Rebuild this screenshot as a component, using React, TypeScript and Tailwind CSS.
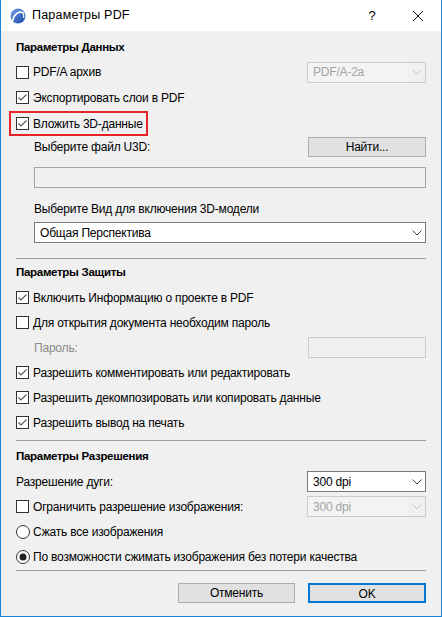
import React from "react";

const font = "font-['Liberation_Sans',Arial,sans-serif]";

function Box({ checked }: { checked?: boolean }) {
  return (
    <svg width="13" height="13" viewBox="0 0 13 13" className="shrink-0">
      <rect x="0.5" y="0.5" width="12" height="12" fill="#fff" stroke="#333" />
      {checked && (
        <path d="M2.5 6.5 L5 9 L10.5 3.5" fill="none" stroke="#555" strokeWidth="1.1" />
      )}
    </svg>
  );
}

function Radio({ checked }: { checked?: boolean }) {
  return (
    <svg width="14" height="14" viewBox="0 0 14 14" className="shrink-0">
      <circle cx="7" cy="7" r="6.5" fill="#fff" stroke="#333" />
      {checked && <circle cx="7" cy="7" r="3.5" fill="#222" />}
    </svg>
  );
}

function Chevron({ color }: { color: string }) {
  return (
    <svg width="10" height="6" viewBox="0 0 10 6">
      <path d="M0.5 0.5 L5 5 L9.5 0.5" fill="none" stroke={color} strokeWidth="1" />
    </svg>
  );
}

function Select({ value, disabled }: { value: string; disabled?: boolean }) {
  return (
    <div
      className={`flex h-[21px] items-center border ${
        disabled ? "border-[#cccccc] bg-[#f0f0f0] text-[#a3a3a3]" : "border-[#7a7a7a] bg-white text-black"
      }`}
    >
      <span className={`flex h-full flex-1 items-center pl-[5px] ${disabled ? "bg-[#f3f3f3]" : ""}`}>{value}</span>
      <span className="flex w-[17px] justify-center">
        <Chevron color={disabled ? "#c4c4c4" : "#444"} />
      </span>
    </div>
  );
}

function CheckRow({ label, checked }: { label: string; checked?: boolean }) {
  return (
    <div className="flex h-[25px] items-center gap-[4px] whitespace-nowrap">
      <Box checked={checked} />
      <span>{label}</span>
    </div>
  );
}

function Header({ children }: { children: React.ReactNode }) {
  return (
    <div className="flex h-[24px] items-center text-[11.5px] font-bold tracking-[-0.3px]">{children}</div>
  );
}

function Logo() {
  return (
    <svg width="16" height="16" viewBox="0 0 16 16">
      <defs>
        <linearGradient id="lg" x1="0" y1="0" x2="1" y2="1">
          <stop offset="0" stopColor="#6f9ce8" />
          <stop offset="1" stopColor="#1d4aa8" />
        </linearGradient>
      </defs>
      <circle cx="8" cy="8" r="7.5" fill="url(#lg)" />
      <path d="M2.5 13 C4 6 9 2.5 13.5 5" fill="none" stroke="#fff" strokeWidth="1.6" />
      <path d="M13.5 5 L13.8 10" fill="none" stroke="#fff" strokeWidth="1.2" />
    </svg>
  );
}

export default function App() {
  return (
    <div
      className={`${font} flex h-[617px] w-[442px] flex-col border-x border-b border-[#1883d7] bg-[#f0f0f0] text-[12px] tracking-[-0.2px] text-black`}
    >
      {/* Title bar */}
      <div className="flex h-[31px] items-center bg-white pl-[9px]">
        <Logo />
        <span className="ml-[6px] flex-1 text-[12.5px] tracking-[0.2px]">Параметры PDF</span>
        <span className="w-[46px] text-center text-[13px]">?</span>
        <span className="flex w-[46px] justify-center">
          <svg width="10" height="10" viewBox="0 0 10 10">
            <path d="M0 0 L10 10 M10 0 L0 10" stroke="#111" strokeWidth="1" />
          </svg>
        </span>
      </div>

      <div className="flex flex-col px-[15px] pt-[5px]">
        <Header>Параметры Данных</Header>
        <div className="flex h-[24px] items-center justify-between">
          <div className="flex items-center gap-[4px]">
            <Box />
            <span>PDF/A архив</span>
          </div>
          <div className="w-[119px]">
            <Select value="PDF/A-2a" disabled />
          </div>
        </div>
        <div className="flex h-[27px] items-center gap-[4px]">
          <Box checked />
          <span>Экспортировать слои в PDF</span>
        </div>
        <div className="-ml-[7px] flex h-[25px] w-[139px] items-center gap-[4px] whitespace-nowrap border-2 border-[#e8242b] pl-[5px]">
          <Box checked />
          <span>Вложить 3D-данные</span>
        </div>

        <div className="flex flex-col pl-[18px]">
          <div className="flex h-[22px] items-center justify-between">
            <span>Выберите файл U3D:</span>
            <button className="h-[20px] w-[118px] border border-[#adadad] bg-[#e1e1e1]">Найти...</button>
          </div>
          <div className="mt-[9px] h-[21px] border border-[#a5a5a5] bg-[#f0f0f0]" />
          <div className="mt-[10px] flex h-[22px] items-center">Выберите Вид для включения 3D-модели</div>
          <div className="mt-[2px]">
            <Select value="Общая Перспектива" />
          </div>
        </div>

        <div className="mt-[15px] h-px bg-[#a0a0a0]" />

        <div className="mt-[2px]">
          <Header>Параметры Защиты</Header>
        </div>
        <CheckRow label="Включить Информацию о проекте в PDF" checked />
        <CheckRow label="Для открытия документа необходим пароль" />
        <div className="flex h-[25px] items-center justify-between pl-[18px]">
          <span className="text-[#8a8a8a]">Пароль:</span>
          <div className="h-[21px] w-[118px] border border-[#cccccc] bg-[#f0f0f0]" />
        </div>
        <CheckRow label="Разрешить комментировать или редактировать" checked />
        <CheckRow label="Разрешить декомпозировать или копировать данные" checked />
        <CheckRow label="Разрешить вывод на печать" checked />

        <div className="mt-[5px] h-px bg-[#a0a0a0]" />

        <div className="mt-[4px]">
          <Header>Параметры Разрешения</Header>
        </div>
        <div className="flex h-[25px] items-center justify-between">
          <span>Разрешение дуги:</span>
          <div className="w-[119px]">
            <Select value="300 dpi" />
          </div>
        </div>
        <div className="flex h-[25px] items-center justify-between">
          <div className="flex items-center gap-[4px]">
            <Box />
            <span>Ограничить разрешение изображения:</span>
          </div>
          <div className="w-[119px]">
            <Select value="300 dpi" disabled />
          </div>
        </div>
        <div className="flex h-[25px] items-center gap-[3px]">
          <Radio />
          <span>Сжать все изображения</span>
        </div>
        <div className="flex h-[25px] items-center gap-[3px] whitespace-nowrap">
          <Radio checked />
          <span>По возможности сжимать изображения без потери качества</span>
        </div>

        <div className="mt-px h-px bg-[#a0a0a0]" />

        <div className="mt-[12px] flex justify-end gap-[13px]">
          <button className="h-[20px] w-[117px] border border-[#adadad] bg-[#e1e1e1]">Отменить</button>
          <button className="h-[20px] w-[118px] border-2 border-[#0078d7] bg-[#e1e1e1]">OK</button>
        </div>
      </div>
    </div>
  );
}
